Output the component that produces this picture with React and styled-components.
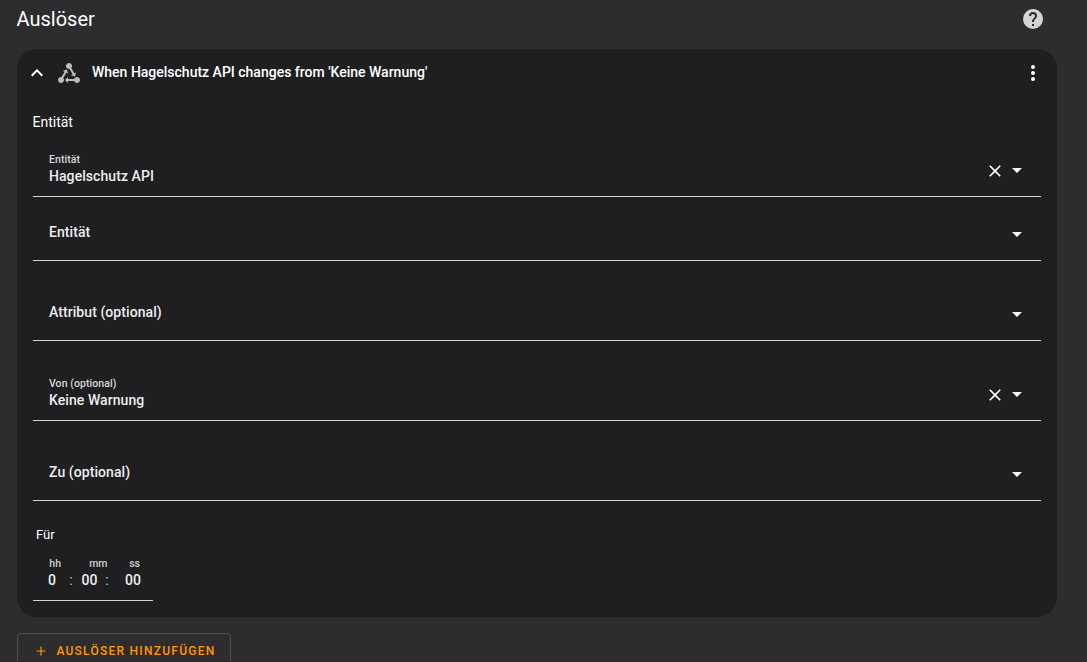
import React from "react";
import styled, { createGlobalStyle } from "styled-components";

const GlobalStyle = createGlobalStyle`
  * { box-sizing: border-box; }
  html, body { margin: 0; height: 100%; overflow: hidden; background: #2d2d2f; }
  body { font-family: Roboto, "Noto Sans", sans-serif; color: #fff; }
`;

const Page = styled.main`
  height: 662px;
  padding: 0 30px 0 17px;
  overflow: hidden;
  border-bottom: 1px solid #2a262a;
`;

const TitleRow = styled.header`
  display: flex;
  align-items: center;
  justify-content: space-between;
  height: 38px;
  padding-right: 12px;
  margin-bottom: 11px;
`;

const Title = styled.h2`
  margin: 0 0 0 -0.5px;
  font-size: 20px;
  font-weight: 400;
  line-height: 28px;
`;

const Card = styled.section`
  height: 568px;
  padding: 0 16px;
  border-radius: 20px;
  background: #1f1f21;
`;

const CardHeader = styled.div`
  display: flex;
  align-items: center;
  height: 48px;
  margin: 0 -4px 0 -8px;
`;

const CardTitle = styled.h3`
  flex: 1;
  margin: 0 0 2px 11px;
  font-size: 14px;
  font-weight: 500;
  line-height: 20px;
`;

const Glyph = styled.svg`
  display: block;
  flex: none;
  width: ${(p) => p.$size || 24}px;
  height: ${(p) => p.$size || 24}px;
  margin-left: ${(p) => p.$gap || 0}px;
  margin-top: ${(p) => p.$drop || 0}px;
  fill: ${(p) => p.$color || "#fff"};
`;

const SectionLabel = styled.div`
  margin: 15px 0 9px -0.5px;
  font-size: 14px;
  line-height: 20px;
`;

const Field = styled.div`
  display: flex;
  align-items: center;
  height: 56px;
  margin-bottom: ${(p) => p.$after ?? 24}px;
  padding: 0 12px 0 16px;
  border-bottom: 1px solid #d5d5d5;
`;

const FieldText = styled.div`
  flex: 1;
  color: #ededed;
  letter-spacing: 0.07px;
`;

const FloatingLabel = styled.div`
  margin-top: 2px;
  font-size: 10.5px;
  font-weight: 500;
  line-height: 14px;
  color: #d8d8d8;
`;

const FieldValue = styled.div`
  margin: ${(p) => (p.$floated ? "-1px 0 0" : "0 0 1px")};
  font-size: 14px;
  font-weight: 500;
  line-height: 20px;
`;

const FieldIcons = styled.div`
  display: flex;
  align-items: center;
  margin-top: 3px;
`;

const DurationLabel = styled.div`
  margin: 0 0 0 3px;
  font-size: 13px;
  line-height: 20px;
`;

const Duration = styled.div`
  display: grid;
  grid-template-columns: 18px 10px 27px 8px 30px;
  grid-template-rows: 16px 18px;
  align-content: start;
  width: 120px;
  height: 56px;
  padding: 10px 0 0 15px;
  border-bottom: 1px solid #d5d5d5;
  color: #ededed;
`;

const Unit = styled.span`
  grid-column: ${(p) => p.$column};
  grid-row: 1;
  justify-self: end;
  margin-right: ${(p) => p.$inset || 0}px;
  color: #d0d0d0;
  font-size: 10.5px;
  font-weight: 500;
  line-height: 18px;
`;

const Digits = styled.span`
  grid-column: ${(p) => p.$column};
  grid-row: 2;
  justify-self: ${(p) => p.$align || "center"};
  font-size: 14px;
  font-weight: 500;
  line-height: 18px;
`;

const Separator = styled(Digits)`
  font-weight: 400;
  color: #c8c8c8;
`;

const AddButton = styled.button`
  display: flex;
  align-items: center;
  width: 214px;
  height: 36px;
  margin-top: 16px;
  padding: 0 0 0 14px;
  border: 1px solid #505052;
  border-radius: 4px;
  background: transparent;
  color: #ff9800;
  font: 500 12px/20px Roboto, sans-serif;
  letter-spacing: 1.25px;
  text-transform: uppercase;
  white-space: nowrap;
`;

const ButtonText = styled.span`
  margin-left: 6.4px;
`;

const paths = {
  help: "M15.07,11.25L14.17,12.17C13.45,12.89 13,13.5 13,15H11V14.5C11,13.39 11.45,12.39 12.17,11.67L13.41,10.41C13.78,10.05 14,9.55 14,9C14,7.89 13.1,7 12,7A2,2 0 0,0 10,9H8A4,4 0 0,1 12,5A4,4 0 0,1 16,9C16,9.88 15.64,10.67 15.07,11.25M13,19H11V17H13M12,2A10,10 0 0,0 2,12A10,10 0 0,0 12,22A10,10 0 0,0 22,12C22,6.47 17.5,2 12,2Z",
  up: "M7.41,15.41L12,10.83L16.59,15.41L18,14L12,8L6,14L7.41,15.41Z",
  state: "M6.27 17.05C6.72 17.58 7 18.25 7 19C7 20.66 5.66 22 4 22S1 20.66 1 19 2.34 16 4 16C4.18 16 4.36 16 4.53 16.05L7.6 10.69L5.86 9.7L9.95 8.58L11.07 12.67L9.33 11.68L6.27 17.05M20 16C18.7 16 17.6 16.84 17.18 18H11V16L8 19L11 22V20H17.18C17.6 21.16 18.7 22 20 22C21.66 22 23 20.66 23 19S21.66 16 20 16M12 8C12.18 8 12.36 8 12.53 7.95L15.6 13.31L13.86 14.3L17.95 15.42L19.07 11.33L17.33 12.32L14.27 6.95C14.72 6.42 15 5.75 15 5C15 3.34 13.66 2 12 2S9 3.34 9 5 10.34 8 12 8Z",
  dots: "M12,16A2,2 0 0,1 14,18A2,2 0 0,1 12,20A2,2 0 0,1 10,18A2,2 0 0,1 12,16M12,10A2,2 0 0,1 14,12A2,2 0 0,1 12,14A2,2 0 0,1 10,12A2,2 0 0,1 12,10M12,4A2,2 0 0,1 14,6A2,2 0 0,1 12,8A2,2 0 0,1 10,6A2,2 0 0,1 12,4Z",
  close: "M19,6.41L17.59,5L12,10.59L6.41,5L5,6.41L10.59,12L5,17.59L6.41,19L12,13.41L17.59,19L19,17.59L13.41,12L19,6.41Z",
  down: "M7,10L12,15L17,10H7Z",
  plus: "M18,12.8H12.8V18H11.2V12.8H6V11.2H11.2V6H12.8V11.2H18V12.8Z",
};

const Icon = ({ name, size, color, gap, drop }) => (
  <Glyph viewBox="0 0 24 24" $size={size} $color={color} $gap={gap} $drop={drop} aria-hidden="true">
    <path d={paths[name]} />
  </Glyph>
);

const SelectField = ({ label, value, after }) => (
  <Field $after={after}>
    <FieldText>
      {value && <FloatingLabel>{label}</FloatingLabel>}
      <FieldValue $floated={Boolean(value)}>{value || label}</FieldValue>
    </FieldText>
    <FieldIcons>
      {value && <Icon name="close" size={20} drop={2} />}
      <Icon name="down" />
    </FieldIcons>
  </Field>
);

export default function App() {
  return (
    <>
      <GlobalStyle />
      <Page>
        <TitleRow>
          <Title>Auslöser</Title>
          <Icon name="help" color="#d5d5d5" />
        </TitleRow>
        <Card>
          <CardHeader>
            <Icon name="up" />
            <Icon name="state" color="#bdbdbd" gap={8} />
            <CardTitle>When Hagelschutz API changes from 'Keine Warnung'</CardTitle>
            <Icon name="dots" />
          </CardHeader>
          <SectionLabel>Entität</SectionLabel>
          <SelectField label="Entität" value="Hagelschutz API" after={8} />
          <SelectField label="Entität" />
          <SelectField label="Attribut (optional)" />
          <SelectField label="Von (optional)" value="Keine Warnung" />
          <SelectField label="Zu (optional)" after={24} />
          <DurationLabel>Für</DurationLabel>
          <Duration>
            <Unit $column={1} $inset={5}>hh</Unit>
            <Unit $column={3} $inset={-4.5}>mm</Unit>
            <Unit $column={5} $inset={1}>ss</Unit>
            <Digits $column={1} $align="start">0</Digits>
            <Separator $column={2}>:</Separator>
            <Digits $column={3}>00</Digits>
            <Separator $column={4}>:</Separator>
            <Digits $column={5} $align="end">00</Digits>
          </Duration>
        </Card>
        <AddButton>
          <Icon name="plus" size={18} color="#ff9800" />
          <ButtonText>Auslöser hinzufügen</ButtonText>
        </AddButton>
      </Page>
    </>
  );
}
